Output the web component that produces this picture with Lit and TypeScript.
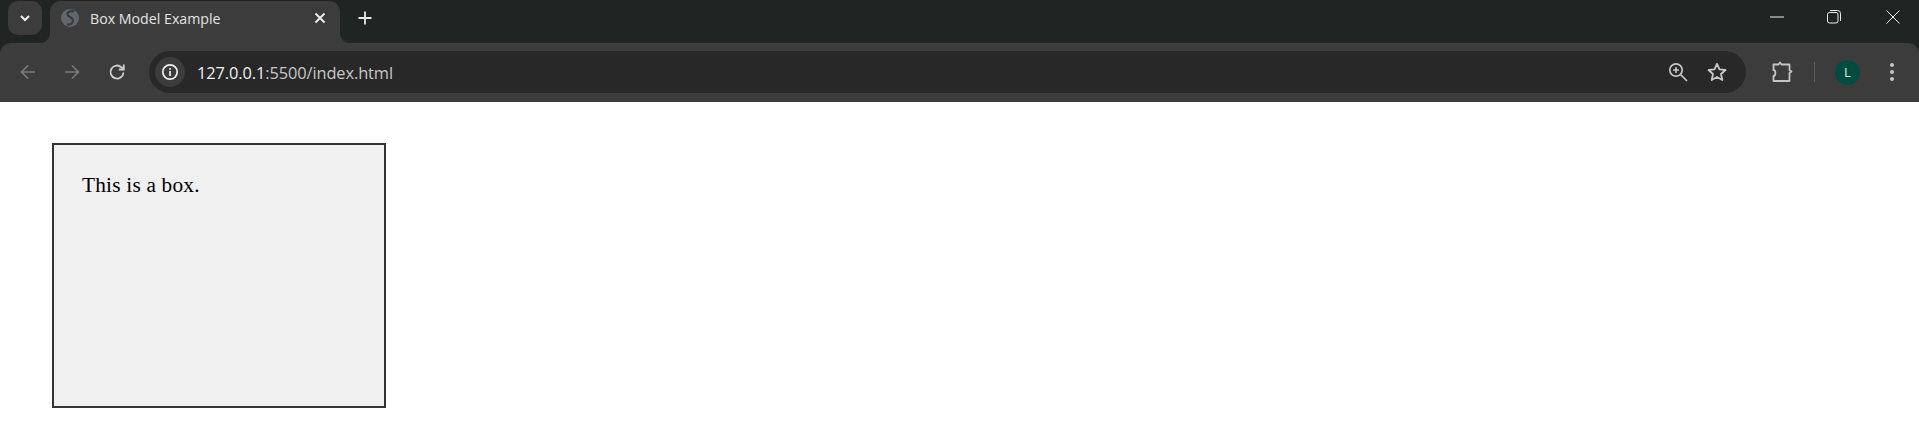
import { LitElement, html, css } from "lit";
import { customElement } from "lit/decorators.js";

@customElement("app-root")
export class AppRoot extends LitElement {
  static styles = css`
    :host { display: block; width: 1919px; height: 436px; background: #fff; overflow: hidden; }
    .chrome { display: flex; flex-direction: column; height: 102px; background: #202423; font-family: "Open Sans", "Noto Sans", sans-serif; }
    .tabs { display: flex; align-items: flex-start; height: 43px; flex: none; }
    .tablist { width: 34px; height: 34px; margin: 1px 0 0 8px; border-radius: 10px; background: #3c3c3c; display: flex; align-items: center; justify-content: center; }
    .tab { position: relative; width: 290px; height: 42px; margin: 1px 0 0 8px; background: #3c3c3c; border-radius: 11px 11px 0 0; display: flex; align-items: center; box-sizing: border-box; padding: 0 0 8px 11px; }
    .tab::before, .tab::after { content: ""; position: absolute; bottom: 0; width: 10px; height: 10px; }
    .tab::before { left: -10px; background: radial-gradient(circle at 0 0, transparent 9.5px, #3c3c3c 10.5px); }
    .tab::after { right: -10px; background: radial-gradient(circle at 100% 0, transparent 9.5px, #3c3c3c 10.5px); }
    .title { margin-left: 11px; font-size: 14.2px; color: #e4e4e4; flex: 1; white-space: nowrap; }
    .tabclose { margin-right: 14px; display: flex; }
    .plus { margin: 11px 0 0 18px; display: flex; }
    .spacer { flex: 1; }
    .win { display: flex; margin: 5px -3px 0 0; }
    .win div { width: 58px; height: 24px; display: flex; align-items: center; justify-content: center; }
    .win div.restore { margin-left: -1px; margin-right: 1px; }
    .toolbar { flex: none; height: 59px; background: #3c3c3c; border-radius: 11px 11px 0 0; display: flex; align-items: center; box-sizing: border-box; padding-bottom: 1px; }
    .nav { width: 44px; display: flex; align-items: center; justify-content: center; }
    .first { margin-left: 6px; }
    .reload { margin-left: 1px; }
    .omni { margin-left: 10px; width: 1597px; height: 42px; border-radius: 21px; background: #282828; display: flex; align-items: center; box-sizing: border-box; padding: 0 0 0 6px; }
    .info { width: 30px; height: 30px; border-radius: 50%; background: #3c3c3c; display: flex; align-items: center; justify-content: center; }
    .url { margin-left: 12px; font-size: 16.4px; color: #c7c7c7; flex: 1; white-space: nowrap; letter-spacing: -0.1px; }
    .url b { font-weight: 400; color: #f0f0f0; }
    .omni svg.zoom { margin-right: 19px; }
    .omni svg.star { margin-right: 19px; }
    .right { display: flex; align-items: center; flex: 1; }
    .ext { margin-left: 25px; display: flex; }
    .sep { width: 1px; height: 20px; background: #5e5e5e; margin-left: 21px; }
    .avatar { width: 25px; height: 25px; margin-left: 20px; border-radius: 50%; background: #004d40; color: #e8e8e8; font-size: 13px; display: flex; align-items: center; justify-content: center; }
    .dots { margin-left: 29px; display: flex; }
    .page { padding: 41px 0 0 52px; }
    .box { width: 334px; height: 265px; box-sizing: border-box; border: 2px solid #333; background: #f0f0f0; padding: 28px; font-family: "Liberation Serif", "Times New Roman", serif; font-size: 21.33px; letter-spacing: 0.2px; line-height: 25px; color: #000; }
  `;

  render() {
    return html`
      <div class="chrome">
        <div class="tabs">
          <div class="tablist">
            <svg width="14" height="14" viewBox="0 0 14 14" fill="none" stroke="#f0f0f0" stroke-width="2"><path d="M3 5l4 4 4-4"/></svg>
          </div>
          <div class="tab">
            <svg width="18" height="18" viewBox="0 0 18 18"><circle cx="9" cy="9" r="9" fill="#62666e"/><path d="M13 2.500C9.500 1.500 6 3 6.500 5.500S11.500 8 12 11s-2.500 5-6 4.500" fill="none" stroke="#3c3c3c" stroke-width="2.200"/></svg>
            <span class="title">Box Model Example</span>
            <span class="tabclose"><svg width="12" height="12" viewBox="0 0 12 12" stroke="#eee" stroke-width="1.800" fill="none"><path d="M1.500 1.500l9 9M10.500 1.500l-9 9"/></svg></span>
          </div>
          <div class="plus"><svg width="14" height="14" viewBox="0 0 14 14" stroke="#e8e8e8" stroke-width="1.800" fill="none"><path d="M7 .5v13M.5 7h13"/></svg></div>
          <div class="spacer"></div>
          <div class="win">
            <div><svg width="14" height="2" viewBox="0 0 14 2"><path d="M0 1h14" stroke="#f0f0f0" stroke-width="1"/></svg></div>
            <div class="restore"><svg width="14" height="14" viewBox="0 0 14 14" fill="none" stroke="#f0f0f0"><rect x=".5" y="2.500" width="10.500" height="10.500" rx="2"/><path d="M3 .5h7.500a3 3 0 0 1 3 3V11"/></svg></div>
            <div><svg width="14" height="14" viewBox="0 0 14 14" fill="none" stroke="#f0f0f0" stroke-width="1"><path d="M.5.5l13 13M13.500.5l-13 13"/></svg></div>
          </div>
        </div>
        <div class="toolbar">
          <div class="nav first"><svg width="18" height="18" viewBox="0 0 18 18" fill="none" stroke="#7a7a7a" stroke-width="1.700"><path d="M16 9H2.500M9 2.500L2.500 9 9 15.500"/></svg></div>
          <div class="nav"><svg width="18" height="18" viewBox="0 0 18 18" fill="none" stroke="#7a7a7a" stroke-width="1.700"><path d="M2 9h13.500M9 2.500L15.500 9 9 15.500"/></svg></div>
          <div class="nav reload"><svg width="18" height="18" viewBox="0 0 18 18" fill="none" stroke="#cfcfcf" stroke-width="1.800"><path d="M15.500 9.500a6.500 6.500 0 1 1-2-5.200L15.500 6"/><path d="M15.800 1.500v5h-5" /></svg></div>
          <div class="omni">
            <div class="info"><svg width="18" height="18" viewBox="0 0 18 18" fill="none" stroke="#f0f0f0" stroke-width="1.700"><circle cx="9" cy="9" r="7.200"/><path d="M9 8v5M9 5v1.800"/></svg></div>
            <span class="url"><b>127.0.0.1</b>:5500/index.html</span>
            <svg class="zoom" width="20" height="20" viewBox="0 0 20 20" fill="none" stroke="#c4c4c4" stroke-width="1.700"><circle cx="8" cy="8" r="6.200"/><path d="M12.500 12.500l6.500 6.500M8 5v6M5 8h6"/></svg>
            <svg class="star" width="20" height="20" viewBox="0 0 20 20" fill="none" stroke="#c8c8c8" stroke-width="1.800" stroke-linejoin="round"><path d="M10 1.800l2.500 5.600 6 .6-4.500 4 1.300 6L10 15l-5.300 3 1.300-6-4.500-4 6-.6z"/></svg>
          </div>
          <div class="right">
            <span class="ext"><svg width="22" height="22" viewBox="0 0 22 22" fill="none" stroke="#c4c4c4" stroke-width="1.800" stroke-linejoin="round"><path d="M2.500 3.500H7.500L9 1.500L10.500 3.500H18.500V9L20.500 10.500L18.500 12V20H2.500V15C5 15 5 9 2.500 9z"/></svg></span>
            <div class="sep"></div>
            <div class="avatar">L</div>
            <span class="dots"><svg width="6" height="20" viewBox="0 0 6 20" fill="#c4c4c4"><circle cx="3" cy="3" r="2"/><circle cx="3" cy="10" r="2"/><circle cx="3" cy="17" r="2"/></svg></span>
          </div>
        </div>
      </div>
      <div class="page"><div class="box">This is a box.</div></div>
    `;
  }
}
